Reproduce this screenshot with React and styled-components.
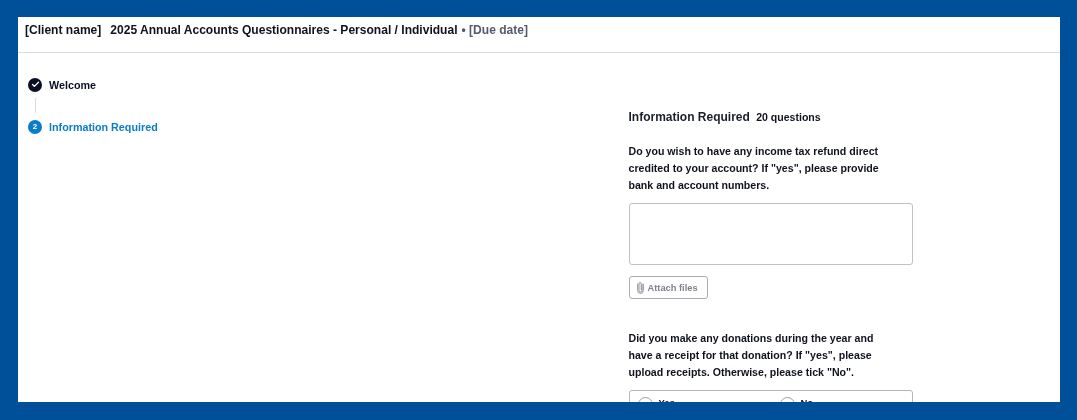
import React from "react";
import styled, { createGlobalStyle } from "styled-components";
import { Check } from "lucide-react";

const GlobalStyle = createGlobalStyle`
  html, body {
    margin: 0;
    padding: 0;
    height: 420px;
    overflow: hidden;
    background: #004f99;
    font-family: "Liberation Sans", Arial, sans-serif;
  }
`;

function ClipIcon() {
  return (
    <svg width="7" height="13" viewBox="0 0 7 13" fill="none" stroke="#8d909c" strokeWidth="1" strokeLinecap="round">
      <path d="M5 3.5v6a1.5 1.5 0 0 1-3 0V2.6a1.1 1.1 0 0 1 2.2 0v6.2" />
      <path d="M6.3 3v6.6a2.8 2.8 0 0 1-5.6 0V3" />
    </svg>
  );
}

export default function App() {
  return (
    <Frame>
      <GlobalStyle />
      <Panel>
        <Header>
          <ClientName>[Client name]</ClientName>
          <span>2025 Annual Accounts Questionnaires - Personal / Individual</span>
          <DueDate>• [Due date]</DueDate>
        </Header>
        <Body>
          <Steps>
            <Step>
              <StepDot $done>
                <Check size={9} strokeWidth={3.5} />
              </StepDot>
              <StepLabel>Welcome</StepLabel>
            </Step>
            <StepLine />
            <Step>
              <StepDot>2</StepDot>
              <StepLabel $active>Information Required</StepLabel>
            </Step>
          </Steps>
          <Form>
            <Title>
              Information Required <Count>20 questions</Count>
            </Title>
            <Question>
              Do you wish to have any income tax refund direct credited to your
              account? If "yes", please provide bank and account numbers.
            </Question>
            <Answer />
            <AttachButton type="button">
              <ClipIcon />
              Attach files
            </AttachButton>
            <Question $second>
              Did you make any donations during the year and have a receipt for
              that donation? If "yes", please upload receipts. Otherwise, please
              tick "No".
            </Question>
            <Choices>
              <Choice>
                <Radio />
                Yes
              </Choice>
              <Choice>
                <Radio />
                No
              </Choice>
            </Choices>
          </Form>
        </Body>
      </Panel>
    </Frame>
  );
}

const Frame = styled.div`
  box-sizing: border-box;
  width: 1077px;
  height: 420px;
  padding: 17px 17px 18px 18px;
  background: #004f99;
`;

const Panel = styled.div`
  height: 100%;
  background: #fff;
  overflow: hidden;
  filter: blur(0.35px);
`;

const Header = styled.header`
  box-sizing: border-box;
  display: flex;
  gap: 4px;
  height: 36px;
  padding: 6px 0 0 7px;
  border-bottom: 1px solid #d9dbe1;
  font-size: 12.05px;
  line-height: 15px;
  font-weight: 700;
  color: #10131f;
`;

const ClientName = styled.span`
  margin-right: 5px;
`;

const DueDate = styled.span`
  color: #545a6d;
`;

const Body = styled.div`
  display: flex;
`;

const Steps = styled.nav`
  box-sizing: border-box;
  width: 610.5px;
  padding: 24px 0 0 10px;
`;

const Step = styled.div`
  display: flex;
  align-items: center;
  gap: 7px;
  height: 15px;
`;

const StepDot = styled.span`
  display: flex;
  align-items: center;
  justify-content: center;
  width: 14px;
  height: 14px;
  border-radius: 50%;
  background: ${(p) => (p.$done ? "#0b0f26" : "#0b7cc9")};
  color: #fff;
  font-size: 8px;
  font-weight: 700;
`;

const StepLabel = styled.span`
  font-size: 10.75px;
  font-weight: 700;
  color: ${(p) => (p.$active ? "#0b7cc9" : "#0b0f26")};
`;

const StepLine = styled.div`
  width: 1px;
  height: 15px;
  margin: 6px 0 6px 7px;
  background: #d9dbe1;
`;

const Form = styled.main`
  width: 284px;
  padding-top: 56px;
`;

const Title = styled.h2`
  margin: 0;
  font-size: 12px;
  line-height: 16px;
  font-weight: 700;
  color: #1b1e2e;
`;

const Count = styled.span`
  margin-left: 3px;
  font-size: 10.55px;
  color: #10131f;
`;

const Question = styled.p`
  width: ${(p) => (p.$second ? "255px" : "265px")};
  margin: ${(p) => (p.$second ? "31px" : "18px")} 0 9px;
  font-size: 10.6px;
  line-height: 17px;
  font-weight: 700;
  color: #10131f;
`;

const Answer = styled.div`
  box-sizing: border-box;
  height: 62px;
  border: 1px solid #bfc1c9;
  border-radius: 3px;
`;

const AttachButton = styled.button`
  display: flex;
  align-items: center;
  gap: 4px;
  box-sizing: border-box;
  height: 23px;
  width: 79px;
  margin-top: 11px;
  padding: 0 0 0 7px;
  background: #fff;
  border: 1px solid #a9abb5;
  border-radius: 3px;
  font-family: inherit;
  font-size: 9.3px;
  font-weight: 700;
  color: #7d818f;
`;

const Choices = styled.div`
  display: grid;
  grid-template-columns: 142px 1fr;
  box-sizing: border-box;
  height: 50px;
  padding: 6px 8px;
  border: 1px solid #b4b6bf;
  border-radius: 3px;
`;

const Choice = styled.label`
  display: flex;
  align-items: flex-start;
  gap: 6px;
  font-size: 9.5px;
  font-weight: 700;
  color: #10131f;
`;

const Radio = styled.span`
  box-sizing: border-box;
  width: 15px;
  height: 15px;
  border: 1px solid #9a9da8;
  border-radius: 50%;
`;
